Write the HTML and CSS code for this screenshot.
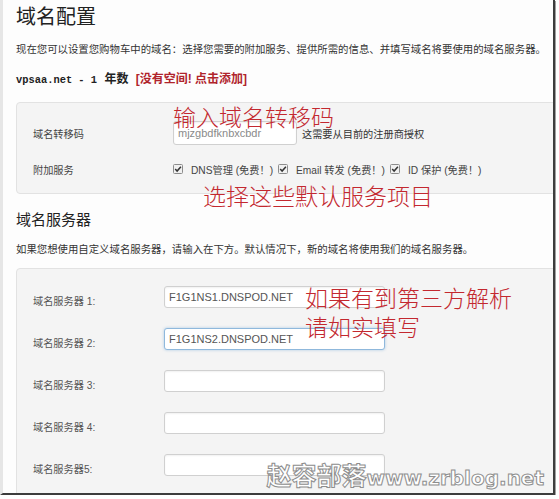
FILE: index.html
```html
<!DOCTYPE html>
<html lang="zh-CN">
<head>
  <meta charset="UTF-8">
  <meta name="viewport" content="width=device-width, initial-scale=1.0">
  <title>域名配置</title>
  <link rel="stylesheet" href="styles.css">
</head>
<body>
  <div class="shot">
    <div class="page">
      <h1 class="title">域名配置</h1>
      <p class="note">现在您可以设置您购物车中的域名：选择您需要的附加服务、提供所需的信息、并填写域名将要使用的域名服务器。</p>
      <p class="domain"><span class="mono">vpsaa.net - 1</span> 年数 <span class="add">[没有空间! 点击添加]</span></p>

      <div class="panel panel-transfer">
        <div class="row">
          <span class="label">域名转移码</span>
          <input class="field field-code" type="text" value="mjzgbdfknbxcbdr">
          <span class="hint">这需要从目前的注册商授权</span>
        </div>
        <div class="row">
          <span class="label">附加服务</span>
          <span class="opt">
            <svg class="cb" width="10" height="10" viewBox="0 0 10 10"><rect x="0.5" y="0.5" width="9" height="9" rx="1" fill="#f0f0f0" stroke="#8c8c8c"/><path d="M2.2 5.1 L4.1 7.1 L7.9 2.7" fill="none" stroke="#333" stroke-width="1.5"/></svg>
            DNS管理 (免费！)
          </span>
          <span class="opt">
            <svg class="cb" width="10" height="10" viewBox="0 0 10 10"><rect x="0.5" y="0.5" width="9" height="9" rx="1" fill="#f0f0f0" stroke="#8c8c8c"/><path d="M2.2 5.1 L4.1 7.1 L7.9 2.7" fill="none" stroke="#333" stroke-width="1.5"/></svg>
            Email 转发 (免费！)
          </span>
          <span class="opt">
            <svg class="cb" width="10" height="10" viewBox="0 0 10 10"><rect x="0.5" y="0.5" width="9" height="9" rx="1" fill="#f0f0f0" stroke="#8c8c8c"/><path d="M2.2 5.1 L4.1 7.1 L7.9 2.7" fill="none" stroke="#333" stroke-width="1.5"/></svg>
            ID 保护 (免费！)
          </span>
        </div>
      </div>

      <h2 class="subtitle">域名服务器</h2>
      <p class="note">如果您想使用自定义域名服务器，请输入在下方。默认情况下，新的域名将使用我们的域名服务器。</p>

      <div class="panel panel-ns">
        <div class="row">
          <span class="label">域名服务器 1:</span>
          <input class="field field-ns" type="text" value="F1G1NS1.DNSPOD.NET">
        </div>
        <div class="row">
          <span class="label">域名服务器 2:</span>
          <input class="field field-ns field-focus" type="text" value="F1G1NS2.DNSPOD.NET">
        </div>
        <div class="row">
          <span class="label">域名服务器 3:</span>
          <input class="field field-ns" type="text" value="">
        </div>
        <div class="row">
          <span class="label">域名服务器 4:</span>
          <input class="field field-ns" type="text" value="">
        </div>
        <div class="row">
          <span class="label">域名服务器5:</span>
          <input class="field field-ns" type="text" value="">
        </div>
      </div>
    </div>

    <!-- red notes written over the screenshot -->
    <div class="tip tip-code">输入域名转移码</div>
    <div class="tip tip-addon">选择这些默认服务项目</div>
    <div class="tip tip-ns">如果有到第三方解析<br>请如实填写</div>

    <div class="mark"><span class="mark-cn">赵容部落</span>www.zrblog.net</div>
  </div>
</body>
</html>
```

FILE: styles.css
```css
body {
  margin: 0;
  background-color: #fff;
  font-family: "Liberation Sans", "Noto Sans CJK SC", sans-serif;
  color: #333;
}

.shot {
  position: relative;
  width: 550px;
  height: 493px;
  overflow: hidden;
  background-color: #fdfdfd;
  border-left: 3px solid #e6e6e6;
  border-right: 2px solid #3c3c3c;
  border-bottom: 2px solid #3c3c3c;
  box-shadow: 1px 1px 0 #a0a0a0;
}

.page {
  padding: 5px 0 0 13px;
}

.title {
  margin: 0;
  font-size: 20px;
  line-height: 24px;
  font-weight: normal;
  color: #222;
}

.subtitle {
  margin: 16px 0 0;
  font-size: 15px;
  line-height: 20px;
  font-weight: normal;
  color: #222;
}

.note {
  margin: 14px 0 0;
  font-size: 10.4px;
  line-height: 14px;
  color: #333;
}

.subtitle + .note {
  margin-top: 13px;
}

.domain {
  margin: 14px 0 0;
  font-size: 12px;
  line-height: 16px;
  font-weight: bold;
  color: #222;
}

.mono {
  font-family: "Liberation Mono", monospace;
  font-size: 10.4px;
  margin-right: 4px;
}

.add {
  color: #b0242c;
  margin-left: 4px;
}

.panel {
  margin: 14px -40px 0 0;
  padding: 17px 16px 11px;
  background-color: #f4f4f4;
  border: 1px solid #e2e2e2;
  border-radius: 4px;
}

.panel-ns {
  margin-top: 11px;
  padding-bottom: 40px;
}

.row {
  display: flex;
  align-items: center;
  height: 26px;
  font-size: 10.2px;
  color: #444;
}

.row + .row {
  margin-top: 10px;
}

.panel-ns .row {
  height: 22px;
}

.panel-ns .row + .row {
  margin-top: 20px;
}

.label {
  width: 140px;
  flex-shrink: 0;
}

.panel-ns .label {
  width: 131px;
  padding-top: 6px;
  color: #555;
}

.field {
  box-sizing: border-box;
  margin: 0;
  padding: 0 4px;
  background-color: #fff;
  border: 1px solid #d0d0d0;
  border-radius: 3px;
  box-shadow: inset 0 1px 2px rgba(0, 0, 0, 0.06);
  font-family: "Liberation Sans", sans-serif;
  font-size: 11px;
  color: #555;
}

.field-code {
  width: 124px;
  height: 24px;
  color: #8a8a8a;
}

.field-ns {
  width: 221px;
  height: 22px;
}

.field-focus {
  border-color: #8fb8dc;
  box-shadow: 0 0 3px rgba(82, 150, 210, 0.45);
}

.hint {
  margin-left: 5px;
  color: #333;
}

.opt {
  display: flex;
  align-items: center;
  gap: 8px;
  margin-right: 5px;
  color: #444;
}

.panel-transfer .opt:first-of-type {
  margin-left: 3px;
}

.cb {
  display: block;
  flex-shrink: 0;
}

.tip {
  position: absolute;
  font-family: "Noto Sans CJK SC", sans-serif;
  font-size: 23px;
  font-weight: 300;
  line-height: 29px;
  color: #c3282f;
  white-space: nowrap;
}

.tip-code {
  left: 170px;
  top: 102px;
}

.tip-addon {
  left: 200px;
  top: 181px;
}

.tip-ns {
  left: 302px;
  top: 283px;
}

.mark {
  position: absolute;
  right: 9px;
  bottom: 1px;
  font-family: "DejaVu Sans", sans-serif;
  font-size: 20px;
  font-weight: bold;
  line-height: 28px;
  color: #fff;
  -webkit-text-stroke: 1px #8e8e8e;
  white-space: nowrap;
}

.mark-cn {
  font-family: "Noto Sans CJK SC", sans-serif;
  font-size: 25px;
}
```
